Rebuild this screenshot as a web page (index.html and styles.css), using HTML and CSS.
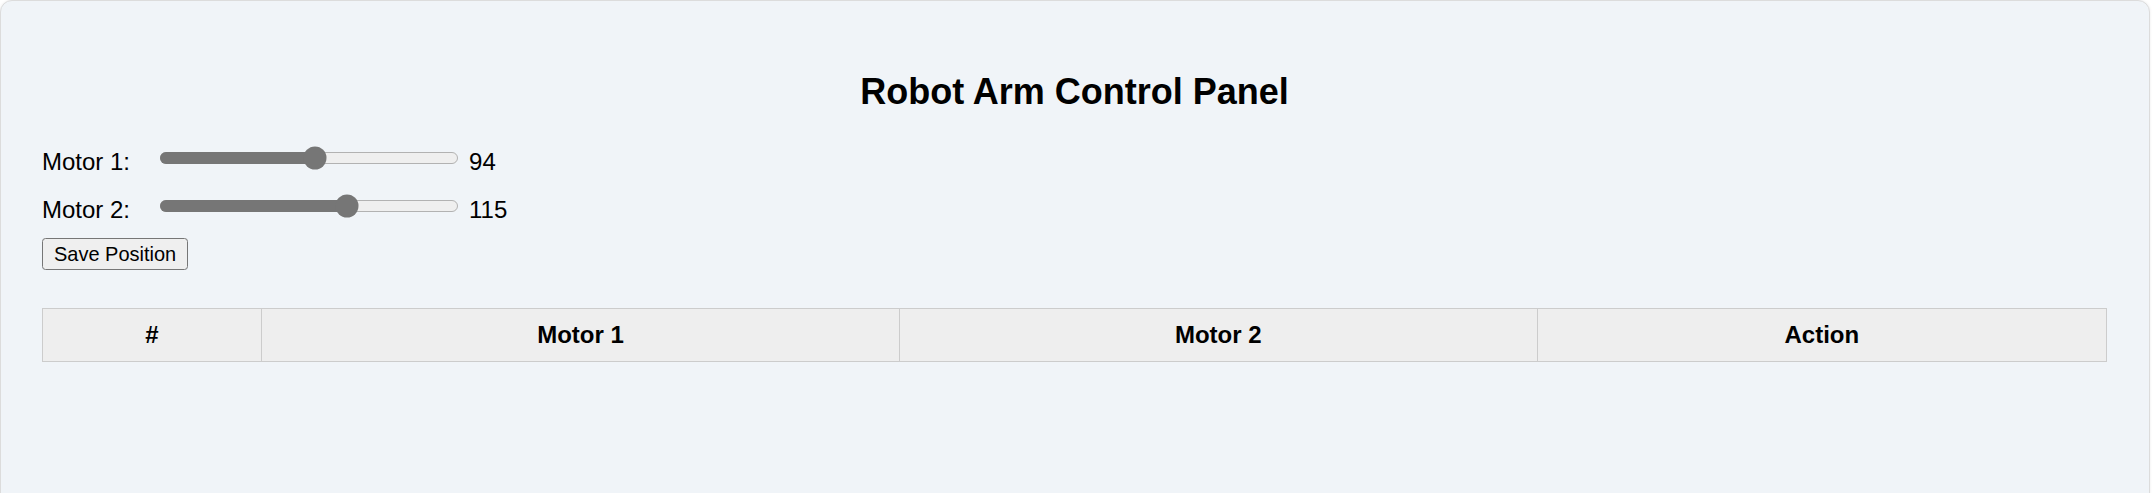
FILE: index.html
```html
<!DOCTYPE html>
<html lang="en">
<head>
<meta charset="utf-8">
<title>Robot Arm Control Panel</title>
<link rel="stylesheet" href="styles.css">
</head>
<body>
<div class="panel">
  <h1 class="title">Robot Arm Control Panel</h1>
  <div class="sliders">
    <div class="control">
      <label class="label" for="m1">Motor 1:</label>
      <input class="slider" id="m1" type="range" min="0" max="180" value="94">
      <span class="value">94</span>
    </div>
    <div class="control">
      <label class="label" for="m2">Motor 2:</label>
      <input class="slider" id="m2" type="range" min="0" max="180" value="115">
      <span class="value">115</span>
    </div>
  </div>
  <button class="save" type="button">Save Position</button>
  <table class="positions">
    <thead>
      <tr><th>#</th><th>Motor 1</th><th>Motor 2</th><th>Action</th></tr>
    </thead>
    <tbody></tbody>
  </table>
</div>
</body>
</html>
```
FILE: styles.css
```css
html, body {
  margin: 0;
  padding: 0;
  background: #ffffff;
  overflow: hidden;
}

body {
  font-family: "Liberation Sans", Arial, sans-serif;
  color: #000;
}

.panel {
  box-sizing: border-box;
  width: 2150px;
  height: 520px;
  background: #f0f4f8;
  border: 1px solid #dcdcdc;
  border-radius: 12px;
  box-shadow: 0 0 3px rgba(0, 0, 0, 0.08);
  padding: 69px 42px 0 41px;
}

.title {
  margin: 0 0 33px 0;
  font-size: 36px;
  line-height: 43px;
  font-weight: bold;
  text-align: center;
}

.sliders {
  display: flex;
  flex-direction: column;
  gap: 20px;
  margin-bottom: 16px;
}

.control {
  display: flex;
  align-items: flex-end;
  font-size: 24px;
  line-height: 24px;
}

.label {
  margin-right: 29px;
}

.slider {
  zoom: 1.5;
  width: 200px;
  margin: 0 0 2.7px 0;
  accent-color: #767676;
}

.value {
  margin-left: 10px;
}

.save {
  display: block;
  zoom: 1.5;
  margin: 0;
  font-family: "Liberation Sans", Arial, sans-serif;
  font-size: 13.333px;
}

.positions {
  width: 100%;
  margin-top: 38px;
  border-collapse: collapse;
  font-size: 24px;
}

.positions th {
  border: 1px solid #cccccc;
  background: #eeeeee;
  padding: 12px;
  font-weight: bold;
  text-align: center;
}
```
